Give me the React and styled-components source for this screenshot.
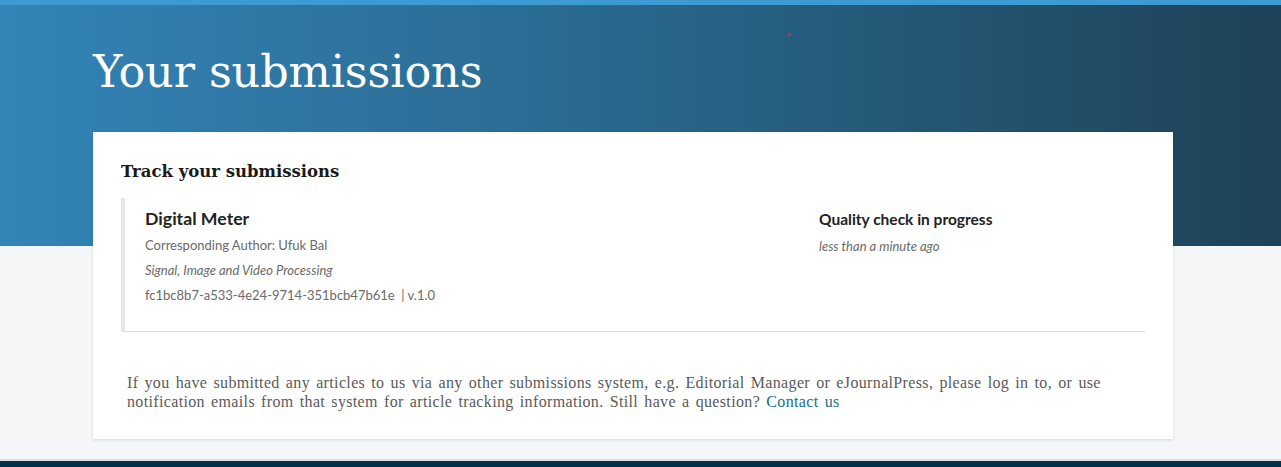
import React from "react";
import styled, { createGlobalStyle } from "styled-components";

const GlobalStyle = createGlobalStyle`
  html, body { margin: 0; padding: 0; }
  body {
    background: #f5f6f8;
    font-family: Lato, "Open Sans", sans-serif;
    overflow: hidden;
  }
  * { box-sizing: border-box; }
`;

const Page = styled.div`
  display: flex;
  flex-direction: column;
  min-height: 467px;
`;

const TopStripe = styled.div`
  height: 5px;
  background: #3d9ad2;
`;

const Hero = styled.header`
  position: relative;
  height: 241px;
  background: linear-gradient(90deg, #3384b8 0%, #2a6a90 45%, #1e4257 100%);
  padding: 39px 108px 0 93px;
`;

const Speck = styled.span`
  position: absolute;
  left: 788px;
  top: 28px;
  width: 3px;
  height: 3px;
  border-radius: 50%;
  background: #a0405e;
`;

const Title = styled.h1`
  margin: 0;
  font-family: "DejaVu Serif", "Liberation Serif", serif;
  font-weight: 400;
  font-size: 44.5px;
  line-height: 56px;
  color: #ffffff;
  letter-spacing: -0.1px;
`;

const Main = styled.main`
  position: relative;
  z-index: 1;
  padding: 0 108px 0 93px;
  margin-top: -114px;
`;

const Card = styled.section`
  background: #ffffff;
  box-shadow: 0 1px 3px rgba(0, 0, 0, 0.12);
  padding: 26px 28px 28px;
`;

const CardHeading = styled.h2`
  margin: 0 0 12px;
  font-family: "DejaVu Serif", "Liberation Serif", serif;
  font-weight: 700;
  font-size: 16.5px;
  line-height: 28px;
  color: #1a1a1a;
`;

const Submission = styled.article`
  display: flex;
  justify-content: space-between;
  border-left: 4px solid #e6e6e6;
  border-bottom: 1px solid #dcdcdc;
  padding: 10px 0 23px 20px;
`;

const Details = styled.div`
  display: flex;
  flex-direction: column;
`;

const SubTitle = styled.h3`
  margin: 0 0 3px;
  font-family: Lato, sans-serif;
  font-weight: 700;
  font-size: 17.7px;
  line-height: 22px;
  color: #222222;
`;

const Meta = styled.div`
  font-family: Lato, sans-serif;
  font-size: 13px;
  line-height: 25px;
  color: #6a6a6a;
  font-style: ${(p) => (p.$italic ? "italic" : "normal")};
`;

const Status = styled.div`
  width: 326px;
  display: flex;
  flex-direction: column;
`;

const StatusTitle = styled.div`
  font-family: Lato, sans-serif;
  font-weight: 700;
  font-size: 15.5px;
  line-height: 22px;
  color: #222222;
`;

const StatusTime = styled.div`
  margin-top: 7px;
  font-family: Lato, sans-serif;
  font-style: italic;
  font-size: 13px;
  line-height: 18px;
  color: #6a6a6a;
`;

const Note = styled.p`
  margin: 42px 0 0 6px;
  font-family: "Liberation Serif", serif;
  font-size: 16px;
  letter-spacing: 0.35px;
  word-spacing: 1.8px;
  line-height: 18.5px;
  color: #5a5a5a;
`;

const Link = styled.a`
  color: #1b6c8c;
  text-decoration: none;
`;

const Footer = styled.footer`
  margin-top: 20px;
  border-top: 2px solid #dde1e5;
  background: #01304a;
  flex: 1;
  min-height: 10px;
`;

export default function App() {
  return (
    <>
      <GlobalStyle />
      <Page>
        <TopStripe />
        <Hero>
          <Speck />
          <Title>Your submissions</Title>
        </Hero>
        <Main>
          <Card>
            <CardHeading>Track your submissions</CardHeading>
            <Submission>
              <Details>
                <SubTitle>Digital Meter</SubTitle>
                <Meta>Corresponding Author: Ufuk Bal</Meta>
                <Meta $italic>Signal, Image and Video Processing</Meta>
                <Meta>fc1bc8b7-a533-4e24-9714-351bcb47b61e&nbsp; | v.1.0</Meta>
              </Details>
              <Status>
                <StatusTitle>Quality check in progress</StatusTitle>
                <StatusTime>less than a minute ago</StatusTime>
              </Status>
            </Submission>
            <Note>
              If you have submitted any articles to us via any other submissions system, e.g. Editorial
              Manager or eJournalPress, please log in to, or use notification emails from that system for
              article tracking information. Still have a question? <Link href="#">Contact us</Link>
            </Note>
          </Card>
        </Main>
        <Footer />
      </Page>
    </>
  );
}
